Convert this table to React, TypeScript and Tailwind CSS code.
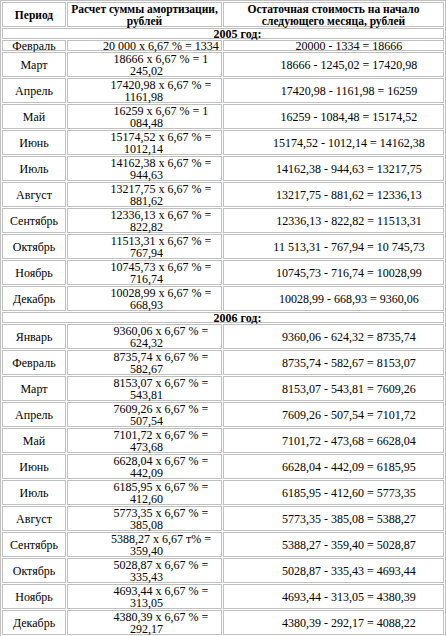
type Row = {
  month: string;
  calc: string[];
  rest: string;
};

const rows2005: Row[] = [
  { month: "Февраль", calc: ["20 000 x 6,67 % = 1334"], rest: "20000 - 1334 = 18666" },
  { month: "Март", calc: ["18666 x 6,67 % = 1", "245,02"], rest: "18666 - 1245,02 = 17420,98" },
  { month: "Апрель", calc: ["17420,98 x 6,67 % =", "1161,98"], rest: "17420,98 - 1161,98 = 16259" },
  { month: "Май", calc: ["16259 x 6,67 % = 1", "084,48"], rest: "16259 - 1084,48 = 15174,52" },
  { month: "Июнь", calc: ["15174,52 x 6,67 % =", "1012,14"], rest: "15174,52 - 1012,14 = 14162,38" },
  { month: "Июль", calc: ["14162,38 x 6,67 % =", "944,63"], rest: "14162,38 - 944,63 = 13217,75" },
  { month: "Август", calc: ["13217,75 x 6,67 % =", "881,62"], rest: "13217,75 - 881,62 = 12336,13" },
  { month: "Сентябрь", calc: ["12336,13 x 6,67 % =", "822,82"], rest: "12336,13 - 822,82 = 11513,31" },
  { month: "Октябрь", calc: ["11513,31 x 6,67 % =", "767,94"], rest: "11 513,31 - 767,94 = 10 745,73" },
  { month: "Ноябрь", calc: ["10745,73 x 6,67 % =", "716,74"], rest: "10745,73 - 716,74 = 10028,99" },
  { month: "Декабрь", calc: ["10028,99 x 6,67 % =", "668,93"], rest: "10028,99 - 668,93 = 9360,06" },
];

const rows2006: Row[] = [
  { month: "Январь", calc: ["9360,06 x 6,67 % =", "624,32"], rest: "9360,06 - 624,32 = 8735,74" },
  { month: "Февраль", calc: ["8735,74 x 6,67 % =", "582,67"], rest: "8735,74 - 582,67 = 8153,07" },
  { month: "Март", calc: ["8153,07 x 6,67 % =", "543,81"], rest: "8153,07 - 543,81 = 7609,26" },
  { month: "Апрель", calc: ["7609,26 x 6,67 % =", "507,54"], rest: "7609,26 - 507,54 = 7101,72" },
  { month: "Май", calc: ["7101,72 x 6,67 % =", "473,68"], rest: "7101,72 - 473,68 = 6628,04" },
  { month: "Июнь", calc: ["6628,04 x 6,67 % =", "442,09"], rest: "6628,04 - 442,09 = 6185,95" },
  { month: "Июль", calc: ["6185,95 x 6,67 % =", "412,60"], rest: "6185,95 - 412,60 = 5773,35" },
  { month: "Август", calc: ["5773,35 x 6,67 % =", "385,08"], rest: "5773,35 - 385,08 = 5388,27" },
  { month: "Сентябрь", calc: ["5388,27 x 6,67 т% =", "359,40"], rest: "5388,27 - 359,40 = 5028,87" },
  { month: "Октябрь", calc: ["5028,87 x 6,67 % =", "335,43"], rest: "5028,87 - 335,43 = 4693,44" },
  { month: "Ноябрь", calc: ["4693,44 x 6,67 % =", "313,05"], rest: "4693,44 - 313,05 = 4380,39" },
  { month: "Декабрь", calc: ["4380,39 x 6,67 % =", "292,17"], rest: "4380,39 - 292,17 = 4088,22" },
];

const cell = "border border-[#c0c0c0] flex flex-col justify-center";
const head = `${cell} h-[25px] text-center font-bold text-[11.5px] whitespace-nowrap`;

const YearRow = ({ year }: { year: string }) => (
  <div className={`${cell} col-span-3 h-[11px] pl-[29px] text-center font-bold`}>{year}</div>
);

const DataRow = ({ row }: { row: Row }) => {
  const h = row.calc.length > 1 ? "h-[25px]" : "h-[11px]";
  return (
    <>
      <div className={`${cell} ${h} text-center`}>{row.month}</div>
      <div className={`${cell} ${h} whitespace-nowrap`}>
        <div className="pl-[33px] text-center">{row.calc[0]}</div>
        {row.calc[1] && <div className="pr-[58px] text-right">{row.calc[1]}</div>}
      </div>
      <div className={`${cell} ${h} pl-[31px] text-center whitespace-nowrap`}>{row.rest}</div>
    </>
  );
};

export default function App() {
  return (
    <div className="w-[446px] bg-white text-black text-[12px] leading-[12px] font-['Liberation_Serif',serif]">
      <div className="grid grid-cols-[64px_155px_221px] gap-px border border-[#c0c0c0] p-px">
        <div className={head}>Период</div>
        <div className={head}>
          <div>Расчет суммы амортизации,</div>
          <div>рублей</div>
        </div>
        <div className={head}>
          <div>Остаточная стоимость на начало</div>
          <div>следующего месяца, рублей</div>
        </div>

        <YearRow year="2005 год:" />
        {rows2005.map((r) => (
          <DataRow key={"a" + r.month} row={r} />
        ))}

        <YearRow year="2006 год:" />
        {rows2006.map((r) => (
          <DataRow key={"b" + r.month} row={r} />
        ))}
      </div>
    </div>
  );
}
